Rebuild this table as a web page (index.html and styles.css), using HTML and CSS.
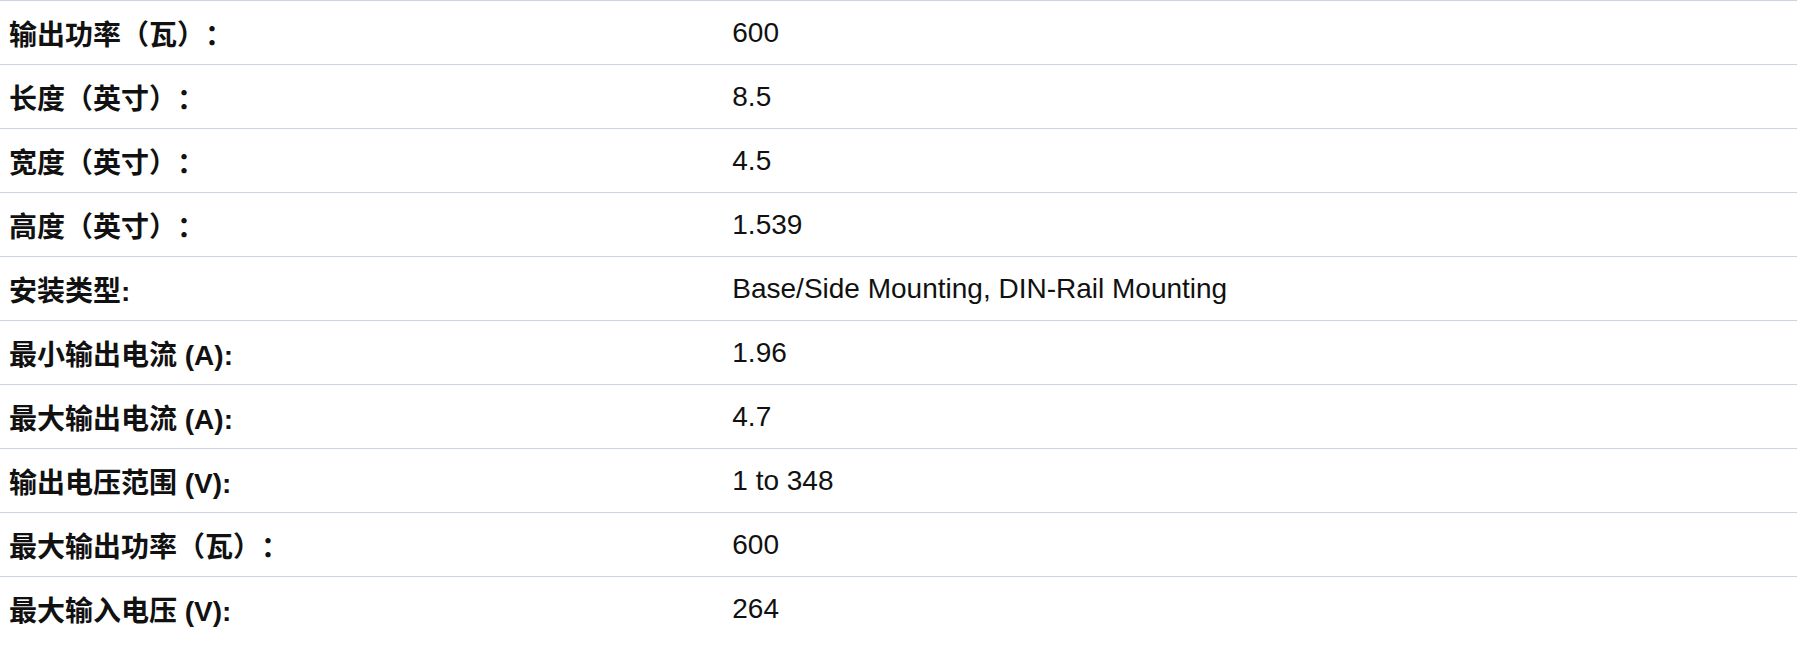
FILE: index.html
```html
<!DOCTYPE html>
<html lang="zh-CN">
<head>
<meta charset="utf-8">
<link rel="stylesheet" href="styles.css">
</head>
<body>
<div class="specs">
  <div class="row"><div class="label">输出功率（瓦）：</div><div class="value">600</div></div>
  <div class="row"><div class="label">长度（英寸）：</div><div class="value">8.5</div></div>
  <div class="row"><div class="label">宽度（英寸）：</div><div class="value">4.5</div></div>
  <div class="row"><div class="label">高度（英寸）：</div><div class="value">1.539</div></div>
  <div class="row"><div class="label">安装类型:</div><div class="value">Base/Side Mounting, DIN-Rail Mounting</div></div>
  <div class="row"><div class="label">最小输出电流 (A):</div><div class="value">1.96</div></div>
  <div class="row"><div class="label">最大输出电流 (A):</div><div class="value">4.7</div></div>
  <div class="row"><div class="label">输出电压范围 (V):</div><div class="value">1 to 348</div></div>
  <div class="row"><div class="label">最大输出功率（瓦）：</div><div class="value">600</div></div>
  <div class="row"><div class="label">最大输入电压 (V):</div><div class="value">264</div></div>
</div>
</body>
</html>
```
FILE: styles.css
```css
html, body {
  margin: 0;
  padding: 0;
  background: #fff;
}
body {
  font-family: "Liberation Sans", Arial, "Noto Sans CJK SC", sans-serif;
  font-size: 28px;
  color: #111;
  text-spacing-trim: space-all;
}
.specs {
  display: flex;
  flex-direction: column;
}
.row {
  display: grid;
  grid-template-columns: 40.25% 1fr;
  height: 64px;
  box-sizing: border-box;
  border-top: 1px solid #cbd5e1;
  align-items: center;
}
.label {
  padding-left: 9px;
  font-weight: bold;
  color: #111;
}
.value {
  padding-left: 9px;
}
```
